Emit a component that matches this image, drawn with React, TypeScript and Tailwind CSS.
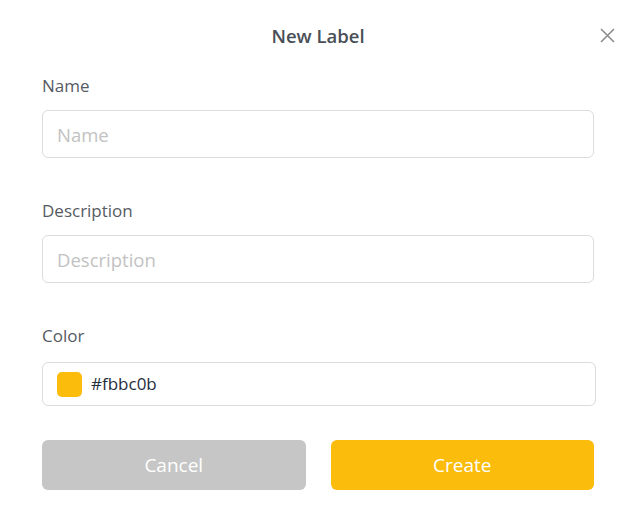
import { useState } from 'react';

export default function App() {
  const [name, setName] = useState('');
  const [description, setDescription] = useState('');
  const [color, setColor] = useState('#fbbc0b');

  return (
    <div className="w-[630px] h-[527px] bg-white font-['Open_Sans',sans-serif] px-[42px] pt-[22px]">
      <div className="relative flex items-center justify-center h-[28px] mb-[24px]">
        <h1 className="text-[18.5px] font-semibold text-[#4a4f57] leading-[28px] pl-[6px]">New Label</h1>
        <button className="absolute right-[-27px] top-[6px] text-[#8a8a8a]" aria-label="Close">
          <svg width="15" height="15" viewBox="0 0 15 15" fill="none" stroke="currentColor" strokeWidth="1.5">
            <path d="M1 1L14 14M14 1L1 14" />
          </svg>
        </button>
      </div>

      <label className="block text-[17px] leading-[24px] text-[#555b63] mb-[12px]">Name</label>
      <input
        value={name}
        onChange={e => setName(e.target.value)}
        placeholder="Name"
        className="block w-[552px] h-[48px] rounded-[6px] border border-[#dcdcdc] px-[14px] text-[18.5px] text-[#1f2d3d] placeholder:text-[#c2c2c2] outline-none"
      />

      <label className="block text-[17px] leading-[24px] text-[#555b63] mt-[41px] mb-[12px]">Description</label>
      <input
        value={description}
        onChange={e => setDescription(e.target.value)}
        placeholder="Description"
        className="block w-[552px] h-[48px] rounded-[6px] border border-[#dcdcdc] px-[14px] text-[18.5px] text-[#1f2d3d] placeholder:text-[#c2c2c2] outline-none"
      />

      <label className="block text-[17px] leading-[24px] text-[#555b63] mt-[41px] mb-[14px]">Color</label>
      <div className="flex items-center gap-[9px] w-[554px] h-[44px] rounded-[6px] border border-[#dcdcdc] px-[14px]">
        <span className="w-[25px] h-[25px] rounded-[5px] bg-[#fbbc0b] shrink-0" />
        <input
          value={color}
          onChange={e => setColor(e.target.value)}
          className="flex-1 text-[17px] text-[#1f2d3d] outline-none"
        />
      </div>

      <div className="grid grid-cols-2 gap-[25px] w-[552px] mt-[34px]">
        <button className="h-[50px] rounded-[6px] bg-[#c6c6c6] text-white text-[19px]">Cancel</button>
        <button className="h-[50px] rounded-[6px] bg-[#fbbc0b] text-white text-[19px]">Create</button>
      </div>
    </div>
  );
}
